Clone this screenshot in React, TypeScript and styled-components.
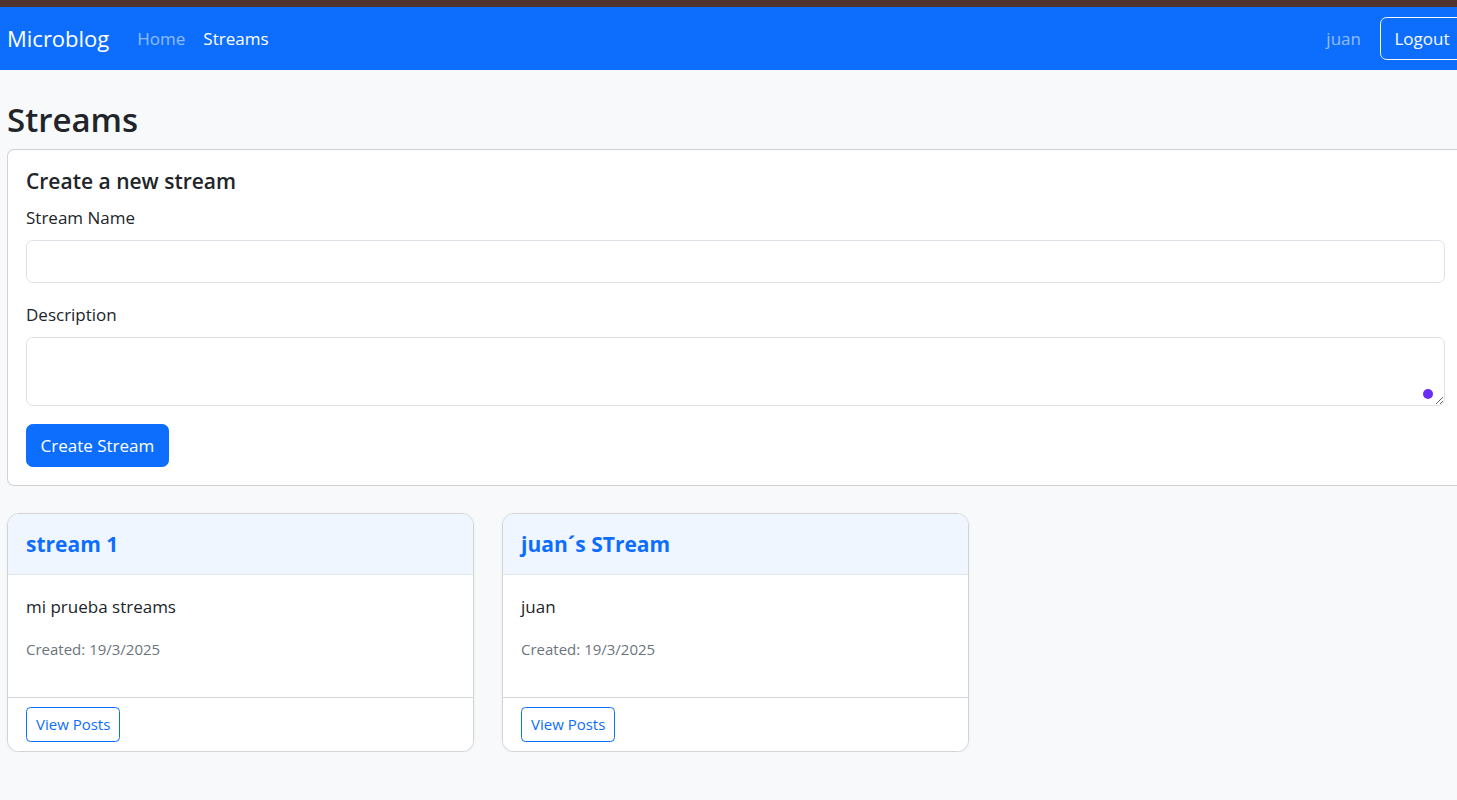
import React from "react";
import styled, { createGlobalStyle } from "styled-components";

const GlobalStyle = createGlobalStyle`
  html, body {
    margin: 0;
    padding: 0;
    overflow-x: hidden;
    background: #f8f9fa;
  }
  body {
    font-family: "Open Sans", "Noto Sans", "Liberation Sans", sans-serif;
    font-size: 17px;
    line-height: 27px;
    color: #212529;
  }
  *, *::before, *::after { box-sizing: border-box; }
`;

const TopStrip = styled.div`
  height: 7px;
  background: #4f332e;
`;

const Navbar = styled.nav`
  background: #0d6efd;
  padding: 9px 0;
`;

const NavInner = styled.div`
  width: 1457px;
  margin-left: 7px;
  display: flex;
  align-items: center;
`;

const Brand = styled.a`
  font-size: 22px;
  line-height: 33.75px;
  padding: 5.6px 0;
  margin-right: 19px;
  color: #fff;
  text-decoration: none;
`;

const NavLink = styled.a<{ $active?: boolean }>`
  display: block;
  padding: 9px;
  color: ${(p) => (p.$active ? "#fff" : "rgba(255,255,255,0.55)")};
  text-decoration: none;
`;

const NavRight = styled.div`
  margin-left: auto;
  display: flex;
  align-items: center;
  gap: 10px;
`;

const OutlineLightButton = styled.button`
  font: inherit;
  padding: 7px 13.5px;
  border: 1px solid #f8f9fa;
  color: #f8f9fa;
  background: transparent;
  border-radius: 6.75px;
`;

const Main = styled.main`
  width: 1457px;
  margin-left: 7px;
  padding-top: 28px;
`;

const PageTitle = styled.h1`
  margin: 0 0 8px;
  font-size: 33px;
  line-height: 43px;
  font-weight: 600;
`;

const FormCard = styled.section`
  background: #fff;
  border: 1px solid rgba(0, 0, 0, 0.175);
  border-radius: 7px;
  padding: 18px;
  margin-bottom: 27px;
`;

const FormTitle = styled.h5`
  margin: 0 0 9px;
  font-size: 21px;
  line-height: 27px;
  font-weight: 600;
`;

const FormGroup = styled.div`
  margin-bottom: 18px;
  position: relative;
`;

const Label = styled.label`
  display: block;
  margin-bottom: 9px;
`;

const Input = styled.input`
  display: block;
  width: 100%;
  font: inherit;
  padding: 6.75px 13.5px;
  border: 1px solid #dee2e6;
  border-radius: 6.75px;
  background: #fff;
  color: #212529;
  outline: none;
`;

const TextArea = styled.textarea`
  display: block;
  width: 100%;
  height: 69px;
  font: inherit;
  padding: 6.75px 13.5px;
  border: 1px solid #dee2e6;
  border-radius: 6.75px;
  background: #fff;
  color: #212529;
  outline: none;
  resize: vertical;
`;

const ExtensionDot = styled.span`
  position: absolute;
  right: 12px;
  bottom: 7px;
  width: 10px;
  height: 10px;
  border-radius: 50%;
  background: #6b2cf5;
`;

const PrimaryButton = styled.button`
  font: inherit;
  padding: 7px 13.5px;
  background: #0d6efd;
  border: 1px solid #0d6efd;
  color: #fff;
  border-radius: 6.75px;
`;

const CardGrid = styled.div`
  display: grid;
  grid-template-columns: repeat(3, 1fr);
  column-gap: 28px;
`;

const StreamCard = styled.article`
  background: #fff;
  border: 1px solid #d3d4d6;
  border-radius: 12px;
  overflow: hidden;
  display: flex;
  flex-direction: column;
  box-shadow: 0 1px 3px rgba(0, 0, 0, 0.06);
`;

const CardHeader = styled.header`
  background: #eff6ff;
  border-bottom: 1px solid #dfe7f1;
  padding: 17px 18px 16px;
`;

const CardTitle = styled.h5`
  margin: 0;
  font-size: 21px;
  line-height: 27px;
  font-weight: 700;
  color: #0d6efd;
`;

const CardBody = styled.div`
  padding: 18px;
  flex: 1;
`;

const CardText = styled.p`
  margin: 0 0 18px;
`;

const CreatedText = styled.p`
  margin: 0 0 18px;
  font-size: 15px;
  line-height: 23px;
  color: #6c757d;
`;

const CardFooter = styled.footer`
  border-top: 1px solid #d3d4d6;
  padding: 9px 18px;
  background: #fff;
`;

const SmallOutlineButton = styled.button`
  font: inherit;
  font-size: 15px;
  line-height: 23px;
  padding: 5px 9px;
  color: #0d6efd;
  background: transparent;
  border: 1px solid #0d6efd;
  border-radius: 4.5px;
`;

const streams = [
  { name: "stream 1", description: "mi prueba streams", created: "19/3/2025" },
  { name: "juan´s STream", description: "juan", created: "19/3/2025" },
];

export default function App() {
  return (
    <>
      <GlobalStyle />
      <TopStrip />
      <Navbar>
        <NavInner>
          <Brand href="#">Microblog</Brand>
          <NavLink href="#">Home</NavLink>
          <NavLink href="#" $active>
            Streams
          </NavLink>
          <NavRight>
            <NavLink as="span">juan</NavLink>
            <OutlineLightButton>Logout</OutlineLightButton>
          </NavRight>
        </NavInner>
      </Navbar>
      <Main>
        <PageTitle>Streams</PageTitle>
        <FormCard>
          <FormTitle>Create a new stream</FormTitle>
          <FormGroup>
            <Label htmlFor="name">Stream Name</Label>
            <Input id="name" type="text" />
          </FormGroup>
          <FormGroup>
            <Label htmlFor="desc">Description</Label>
            <TextArea id="desc" rows={2} />
            <ExtensionDot />
          </FormGroup>
          <PrimaryButton>Create Stream</PrimaryButton>
        </FormCard>
        <CardGrid>
          {streams.map((s) => (
            <StreamCard key={s.name}>
              <CardHeader>
                <CardTitle>{s.name}</CardTitle>
              </CardHeader>
              <CardBody>
                <CardText>{s.description}</CardText>
                <CreatedText>Created: {s.created}</CreatedText>
              </CardBody>
              <CardFooter>
                <SmallOutlineButton>View Posts</SmallOutlineButton>
              </CardFooter>
            </StreamCard>
          ))}
        </CardGrid>
      </Main>
    </>
  );
}
